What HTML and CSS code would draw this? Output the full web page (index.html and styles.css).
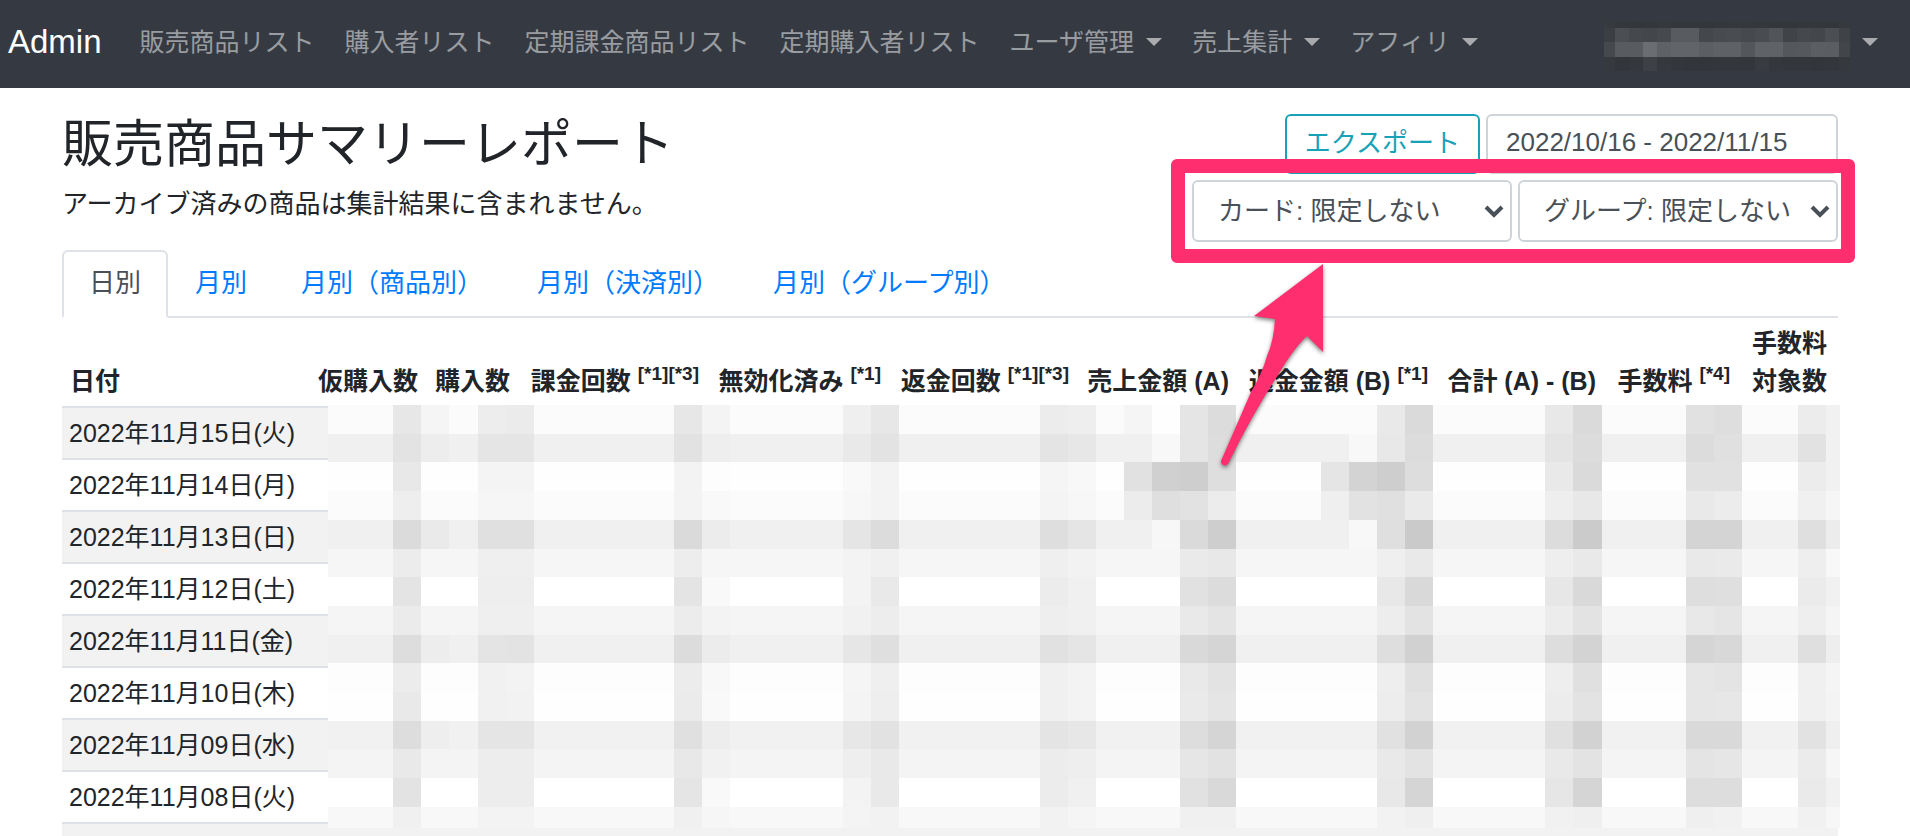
FILE: index.html
```html
<!DOCTYPE html>
<html lang="ja">
<head>
    <meta charset="UTF-8">
    <meta name="viewport" content="width=device-width, initial-scale=1.0">
    <title>販売商品サマリーレポート</title>
    <link rel="stylesheet" href="styles.css">
</head>
<body>
    <nav class="navbar">
        <a class="brand" href="#">Admin</a>
        <div class="nav-links">
            <a class="nav-link" href="#">販売商品リスト</a>
            <a class="nav-link" href="#">購入者リスト</a>
            <a class="nav-link" href="#">定期課金商品リスト</a>
            <a class="nav-link" href="#">定期購入者リスト</a>
            <a class="nav-link dropdown" href="#">ユーザ管理</a>
            <a class="nav-link dropdown" href="#">売上集計</a>
            <a class="nav-link dropdown" href="#">アフィリ</a>
        </div>
        <a class="nav-link dropdown user" href="#" aria-label="アカウント">
            <svg class="user-mask" id="userMask" viewBox="0 0 246 49" aria-hidden="true"></svg>
        </a>
    </nav>

    <main class="container">
        <header class="report-header">
            <div>
                <h1>販売商品サマリーレポート</h1>
                <p>アーカイブ済みの商品は集計結果に含まれません。</p>
            </div>
            <div class="tools">
                <div class="tool-row">
                    <button class="export-btn" type="button">エクスポート</button>
                    <input class="date-range" type="text" value="2022/10/16 - 2022/11/15" aria-label="期間">
                </div>
                <div class="tool-row filters">
                    <select class="filter" aria-label="カード">
                        <option>カード: 限定しない</option>
                    </select>
                    <select class="filter" aria-label="グループ">
                        <option>グループ: 限定しない</option>
                    </select>
                    <svg class="arrow" viewBox="0 0 120 212" aria-hidden="true">
                        <path d="M109 4 L40 56 L61 59 Q60 80 53 96 Q48 114 37 132 L7 201 A4 4 0 0 0 14 204 Q38 155 64 115 Q80 88 93 76 L109 92 Z"/>
                    </svg>
                </div>
            </div>
        </header>

        <div class="tabs">
            <a class="tab active" href="#">日別</a>
            <a class="tab" href="#">月別</a>
            <a class="tab" href="#">月別（商品別）</a>
            <a class="tab" href="#">月別（決済別）</a>
            <a class="tab" href="#">月別（グループ別）</a>
        </div>

        <div class="table-wrap">
            <table>
                <colgroup>
                    <col class="col-date">
                    <col class="col-temp">
                    <col class="col-buy">
                    <col class="col-charge">
                    <col class="col-void">
                    <col class="col-refund">
                    <col class="col-sales">
                    <col class="col-back">
                    <col class="col-total">
                    <col class="col-fee">
                    <col class="col-target">
                </colgroup>
                <thead>
                    <tr>
                        <th>日付</th>
                        <th>仮購入数</th>
                        <th>購入数</th>
                        <th>課金回数 <sup>[*1][*3]</sup></th>
                        <th>無効化済み <sup>[*1]</sup></th>
                        <th>返金回数 <sup>[*1][*3]</sup></th>
                        <th>売上金額 (A)</th>
                        <th>返金金額 (B) <sup>[*1]</sup></th>
                        <th>合計 (A) - (B)</th>
                        <th>手数料 <sup>[*4]</sup></th>
                        <th>手数料<br>対象数</th>
                    </tr>
                </thead>
                <tbody>
                    <tr><td>2022年11月15日(火)</td><td colspan="10"></td></tr>
                    <tr><td>2022年11月14日(月)</td><td colspan="10"></td></tr>
                    <tr><td>2022年11月13日(日)</td><td colspan="10"></td></tr>
                    <tr><td>2022年11月12日(土)</td><td colspan="10"></td></tr>
                    <tr><td>2022年11月11日(金)</td><td colspan="10"></td></tr>
                    <tr><td>2022年11月10日(木)</td><td colspan="10"></td></tr>
                    <tr><td>2022年11月09日(水)</td><td colspan="10"></td></tr>
                    <tr><td>2022年11月08日(火)</td><td colspan="10"></td></tr>
                    <tr><td></td><td colspan="10"></td></tr>
                </tbody>
            </table>
            <svg class="data-mask" id="dataMask" viewBox="0 0 1512 423" preserveAspectRatio="none" aria-hidden="true"></svg>
        </div>
    </main>

    <script>
        function addRect(svg, x, y, w, h, fill) {
            const rect = document.createElementNS('http://www.w3.org/2000/svg', 'rect');
            rect.setAttribute('x', x);
            rect.setAttribute('y', y);
            rect.setAttribute('width', w);
            rect.setAttribute('height', h);
            rect.setAttribute('fill', fill);
            svg.appendChild(rect);
        }

        // 集計値のモザイク: 先頭は行の地色、以降は darkCols の濃さ
        const darkCols = [3, 6, 7, 13, 14, 19, 20, 26, 27, 31, 32, 38, 39, 44, 45, 49, 50, 53, 54];
        const dataRows = [
            'fb e7 ed eb e7 f4 ef e7 ec ee e5 dc e9 da e8 da e1 de ec f1',
            'f0 e3 e5 e5 e2 ee e9 e3 e4 e7 e5 dd e8 dc e4 dc dc e0 e2 f1',
            'fe e8 f4 f4 f3 fd f9 f3 f5 f8 ce de ce dd e9 da e1 e1 ec f1',
            'fb ee f6 f6 f3 f9 f7 f3 f4 f7 e2 ec e0 ea ee e8 e9 ec f0 f6',
            'f0 db e0 e0 da ec e5 dc de e5 da ce df ca dc cb d4 d4 df ec',
            'f6 ec ef ef ed f6 f3 f0 ef f2 ea e8 ef e9 ee e9 e9 ea ee f8',
            'ff e4 ee ee e4 f9 f3 e9 ec f0 e1 dc e8 d9 e7 d9 de df eb f1',
            'f5 eb ef ef ec f3 f1 ed ee f0 e9 e4 ed e3 ec e3 e8 e5 ee f5',
            'f0 dd e4 e3 dc ec e6 df e1 e5 d9 d5 de d1 dd d3 d5 d8 df ee',
            'fd ec f1 f3 ec f8 f5 ef f0 f3 e9 e3 ee e0 ee e0 e6 e4 f0 f5',
            'fe e9 f1 f2 eb f9 f4 ee f0 f3 ea e5 ed e3 ec e3 e6 e7 f0 f4',
            'f1 dd e5 e5 e0 ed e7 e2 e4 e7 dd d5 e1 d2 e0 d2 d9 d9 e2 ef',
            'f4 e9 ed ed e8 f1 ee e9 ec ee e6 e2 e9 e3 e9 e3 e4 e6 eb f6',
            'ff e3 ed ed e5 f9 f3 e9 ec f0 e1 d9 e8 d5 e6 d5 dd dd ea f1',
            'f8 f0 f3 f3 f0 f6 f4 f2 f2 f5 f0 f0 f2 ef f1 ef ef f1 f1 f7'
        ];
        const extraCells = {
            0: { 4: 'f5', 29: 'f5', 30: 'fe' },
            1: { 4: 'ed', 30: 'f8', 37: 'f8' },
            2: { 29: 'e1', 30: 'd0', 36: 'e5', 37: 'd3' },
            3: { 29: 'ec', 30: 'df', 36: 'ef', 37: 'e2' },
            4: { 4: 'ea', 30: 'f7', 37: 'f8' },
            8: { 4: 'ed' },
            11: { 4: 'ee' }
        };
        const dataMask = document.getElementById('dataMask');

        dataRows.forEach((line, r) => {
            const levels = line.split(' ');
            const y = Math.round(r * 28.7);
            const h = (r === 14 ? 423 : Math.round((r + 1) * 28.7)) - y;
            addRect(dataMask, 0, y, 1512, h, '#' + levels[0].repeat(3));

            const cells = Object.assign({}, extraCells[r]);
            darkCols.forEach((col, i) => cells[col] = levels[i + 1]);
            Object.keys(cells).forEach(col => {
                const x = Math.round(9 + (col - 1) * 28.1);
                const right = Math.min(1512, Math.round(9 + col * 28.1));
                addRect(dataMask, x, y, right - x, h, '#' + cells[col].repeat(3));
            });
        });

        // ユーザー名のモザイク
        const userRows = [
            [0, 6, '37 34 33 34 35 34 34 33 34 35 35 34 33 33 34 34 33 36'],
            [6, 14, '3b 4b 45 43 46 58 58 44 47 49 46 49 51 40 45 43 4b 3f'],
            [20, 15, '45 58 58 6a 5e 61 61 5b 5e 5e 53 5f 5f 54 55 5b 5a 42'],
            [35, 14, '36 32 34 3d 35 33 32 32 33 33 33 38 34 33 33 32 33 35']
        ];
        const userMask = document.getElementById('userMask');

        userRows.forEach(([y, h, line]) => {
            line.split(' ').forEach((level, i) => {
                const v = parseInt(level, 16);
                const x = i === 0 ? 0 : 11 + (i - 1) * 14;
                const w = i === 0 || i === 17 ? 11 : 14;
                addRect(userMask, x, y, w, h, `rgb(${v}, ${v + 3}, ${v + 7})`);
            });
        });
    </script>
</body>
</html>
```

FILE: styles.css
```css
* {
    box-sizing: border-box;
}

body {
    margin: 0;
    height: 100vh;
    overflow: hidden;
    background: #fff;
    color: #212529;
    font-family: "Liberation Sans", "Noto Sans CJK JP", sans-serif;
    font-size: 26px;
    line-height: 38px;
}

a {
    text-decoration: none;
}

.navbar {
    display: flex;
    align-items: center;
    height: 88px;
    padding: 0 17px 4px 8px;
    background: #353a42;
    white-space: nowrap;
}

.brand {
    margin-right: 23px;
    color: #fff;
    font-size: 33px;
}

.nav-links {
    display: flex;
    flex: 1;
}

.nav-link {
    display: flex;
    align-items: center;
    padding: 0 15px;
    color: #999ca0;
    font-size: 25px;
}

.dropdown::after {
    content: "";
    margin-left: 12px;
    border-top: 8px solid #a9abae;
    border-left: 8px solid transparent;
    border-right: 8px solid transparent;
}

.user-mask {
    width: 246px;
    height: 49px;
    margin-top: 8px;
    shape-rendering: crispEdges;
}

.container {
    padding: 26px 72px 0 62px;
}

.report-header {
    display: flex;
    justify-content: space-between;
    padding-bottom: 8px;
}

h1 {
    margin: 0 0 10px;
    font-size: 51px;
    font-weight: 400;
    line-height: 61px;
}

p {
    margin: 0;
}

.tool-row {
    display: flex;
    justify-content: flex-end;
    gap: 6px;
}

.export-btn,
.date-range,
.filter {
    height: 60px;
    border: 2px solid #ced4da;
    border-radius: 6px;
    background: #fff;
    color: #495057;
    font: inherit;
}

.export-btn {
    padding: 0 18px 3px;
    border-color: #17a2b8;
    color: #17a2b8;
    cursor: pointer;
}

.date-range {
    width: 352px;
    padding: 0 18px 3px;
}

.filters {
    position: relative;
    margin-top: 6px;
}

.filter {
    width: 320px;
    height: 62px;
    padding: 0 24px;
    appearance: none;
    background: #fff url("data:image/svg+xml,%3Csvg xmlns='http://www.w3.org/2000/svg' viewBox='0 0 20 14'%3E%3Cpath d='M2 3l8 8 8-8' fill='none' stroke='%23495057' stroke-width='4'/%3E%3C/svg%3E") no-repeat right 6px center / 20px 14px;
}

/* 絞り込み欄の強調枠 */
.filters::after {
    content: "";
    position: absolute;
    inset: -21px -17px -21px -21px;
    border: 14px solid #ff2e6e;
    border-radius: 6px;
    pointer-events: none;
}

.arrow {
    position: absolute;
    top: 80px;
    right: 504px;
    z-index: 2;
    width: 120px;
    height: 212px;
    fill: #ff2e6e;
    filter: drop-shadow(0 2px 2px rgba(0, 0, 0, 0.5));
    pointer-events: none;
}

.tabs {
    display: flex;
    border-bottom: 2px solid #dee2e6;
}

.tab {
    margin-bottom: -2px;
    padding: 12px 25px 14px;
    border: 2px solid transparent;
    border-radius: 6px 6px 0 0;
    color: #007bff;
    white-space: nowrap;
}

.tab.active {
    border-color: #dee2e6 #dee2e6 #fff;
    background: #fff;
    color: #495057;
}

.table-wrap {
    position: relative;
}

table {
    width: 100%;
    table-layout: fixed;
    border-collapse: separate;
    border-spacing: 0;
    font-size: 25px;
}

.col-date { width: 246px; }
.col-temp { width: 117px; }
.col-buy { width: 92px; }
.col-charge { width: 189px; }
.col-void { width: 182px; }
.col-refund { width: 188px; }
.col-sales { width: 160px; }
.col-back { width: 199px; }
.col-total { width: 168px; }
.col-fee { width: 134px; }
.col-target { width: 101px; }

th,
td {
    padding: 6px 7px;
    white-space: nowrap;
}

th {
    text-align: right;
    vertical-align: bottom;
}

th:first-child {
    padding-left: 8px;
    text-align: left;
}

th:last-child {
    padding-right: 11px;
}

td {
    height: 52px;
    border-top: 2px solid #dee2e6;
}

tbody tr:nth-child(odd) {
    background: #f2f2f2;
}

sup {
    position: relative;
    top: -10px;
    font-size: 19px;
    line-height: 0;
    vertical-align: baseline;
}

/* 集計値を隠すモザイク */
.data-mask {
    position: absolute;
    top: 87px;
    left: 266px;
    width: calc(100% - 264px);
    height: 423px;
    shape-rendering: crispEdges;
}
```
